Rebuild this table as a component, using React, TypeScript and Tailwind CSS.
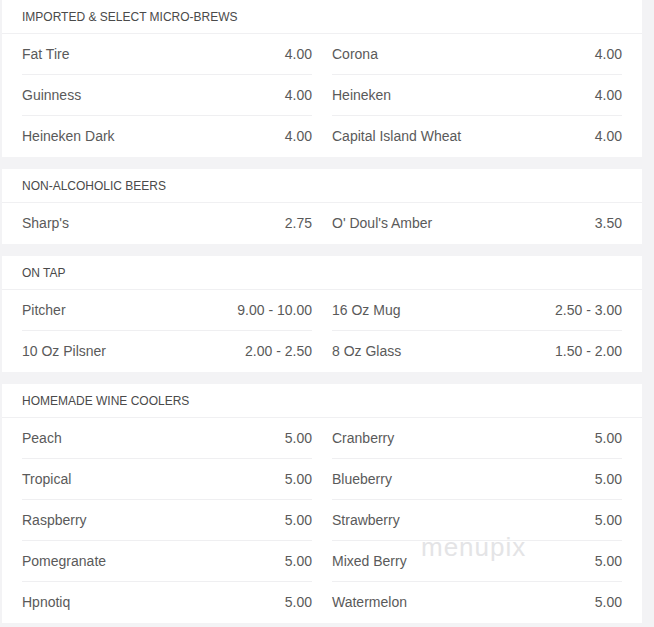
const sections: { title: string; items: [string, string][] }[] = [
  {
    title: "Imported & Select Micro-Brews",
    items: [
      ["Fat Tire", "4.00"],
      ["Corona", "4.00"],
      ["Guinness", "4.00"],
      ["Heineken", "4.00"],
      ["Heineken Dark", "4.00"],
      ["Capital Island Wheat", "4.00"],
    ],
  },
  {
    title: "Non-Alcoholic Beers",
    items: [
      ["Sharp's", "2.75"],
      ["O' Doul's Amber", "3.50"],
    ],
  },
  {
    title: "On Tap",
    items: [
      ["Pitcher", "9.00 - 10.00"],
      ["16 Oz Mug", "2.50 - 3.00"],
      ["10 Oz Pilsner", "2.00 - 2.50"],
      ["8 Oz Glass", "1.50 - 2.00"],
    ],
  },
  {
    title: "Homemade Wine Coolers",
    items: [
      ["Peach", "5.00"],
      ["Cranberry", "5.00"],
      ["Tropical", "5.00"],
      ["Blueberry", "5.00"],
      ["Raspberry", "5.00"],
      ["Strawberry", "5.00"],
      ["Pomegranate", "5.00"],
      ["Mixed Berry", "5.00"],
      ["Hpnotiq", "5.00"],
      ["Watermelon", "5.00"],
    ],
  },
];

function Section({ title, items }: { title: string; items: [string, string][] }) {
  const rows = Math.ceil(items.length / 2);
  return (
    <div className="bg-white">
      <div className="h-[34px] flex items-center px-5 border-b border-[#f0f0f2] text-[12px] uppercase text-[#4a4a4a]">
        {title}
      </div>
      <div className="grid grid-cols-2 gap-x-5 px-5">
        {items.map(([name, price], i) => {
          const last = Math.floor(i / 2) === rows - 1;
          return (
            <div
              key={name}
              className={`h-[41px] flex items-center justify-between text-[14px] text-[#5a5a5a] ${
                last ? "" : "border-b border-[#efeff1]"
              }`}
            >
              <span>{name}</span>
              <span>{price}</span>
            </div>
          );
        })}
      </div>
    </div>
  );
}

export default function App() {
  return (
    <div
      className="relative w-[654px] h-[627px] overflow-hidden bg-[#f3f3f5] pl-[2px] pr-[12px]"
      style={{ fontFamily: "'Liberation Sans', Arial, sans-serif" }}
    >
      <div className="flex flex-col gap-3">
        {sections.map((s) => (
          <Section key={s.title} title={s.title} items={s.items} />
        ))}
      </div>
      <div className="absolute left-[421px] top-[528px] text-[26px] tracking-[1px] text-[#e4e4e6] font-light select-none">
        menupix
      </div>
    </div>
  );
}
